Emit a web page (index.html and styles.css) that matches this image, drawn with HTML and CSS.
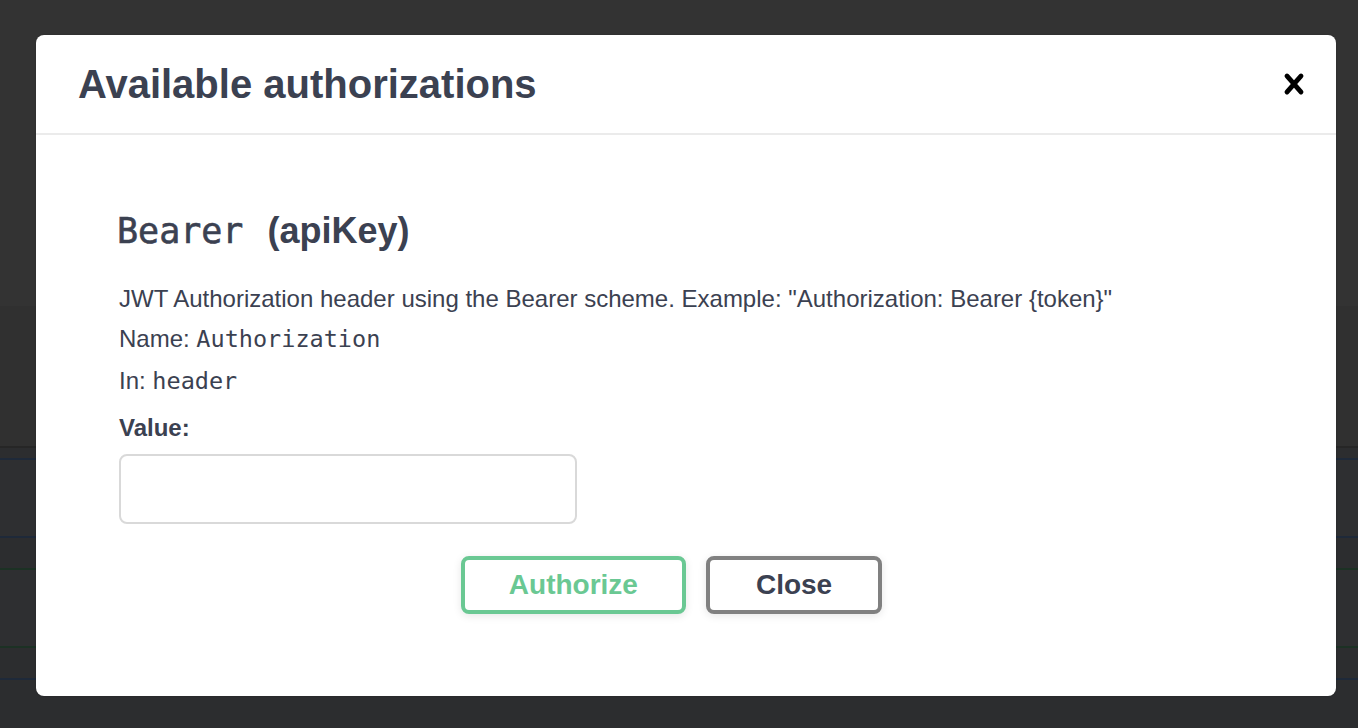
FILE: index.html
```html
<!DOCTYPE html>
<html lang="en">
<head>
<meta charset="utf-8">
<title>Available authorizations</title>
<link rel="stylesheet" href="styles.css">
</head>
<body>
<div class="page">
  <div class="page-top"></div>
  <div class="page-info"></div>
  <div class="op op-blue"></div>
  <div class="op op-green"></div>
  <div class="op op-blue2"></div>
  <div class="page-rest"></div>
</div>

<div class="modal">
  <div class="modal-header">
    <h3 class="modal-title">Available authorizations</h3>
    <button class="close-modal" aria-label="Close">
      <svg width="40" height="40" viewBox="0 0 20 20"><path fill="#000" d="M14.348 14.849a1.2 1.2 0 0 1-1.697 0L10 11.819l-2.651 3.029a1.2 1.2 0 1 1-1.697-1.697l2.758-3.15-2.759-3.152a1.2 1.2 0 1 1 1.697-1.697L10 8.183l2.651-3.031a1.2 1.2 0 1 1 1.697 1.697l-2.758 3.152 2.758 3.15a1.2 1.2 0 0 1 0 1.698z"/></svg>
    </button>
  </div>
  <div class="modal-body">
    <h4 class="scheme-title"><code class="scheme-name">Bearer</code>(apiKey)</h4>
    <p class="desc">JWT Authorization header using the Bearer scheme. Example: "Authorization: Bearer {token}"</p>
    <p class="meta meta-name">Name: <code class="mono">Authorization</code></p>
    <p class="meta meta-in">In: <code class="mono">header</code></p>
    <label class="value-label">Value:</label>
    <input class="value-input" type="text">
    <div class="btn-row">
      <button class="btn btn-authorize">Authorize</button>
      <button class="btn btn-close">Close</button>
    </div>
  </div>
</div>
</body>
</html>
```

FILE: styles.css
```css
html, body {
  margin: 0;
  padding: 0;
}

body {
  width: 1358px;
  height: 728px;
  overflow: hidden;
  background: #2c2d2f;
  font-family: "Liberation Sans", Arial, sans-serif;
  color: #3b4151;
}

.page {
  display: flex;
  flex-direction: column;
}

.page-top {
  height: 306px;
  background: #333333;
}

.page-info {
  height: 140px;
  background: #303030;
  border-bottom: 2px solid #262626;
}

.op {
  height: 76px;
  background: #2e2f31;
}

.op-blue {
  margin-top: 10px;
  border-top: 2px solid #1e2939;
  border-bottom: 2px solid #1e2939;
}

.op-green {
  margin-top: 30px;
  border-top: 2px solid #1c3124;
  border-bottom: 2px solid #1c3124;
}

.op-blue2 {
  margin-top: 30px;
  height: 0;
  border-top: 2px solid #1e2939;
}

.page-rest {
  flex: 1;
}

.modal {
  position: absolute;
  left: 36px;
  top: 35px;
  width: 1300px;
  background: #ffffff;
  border-radius: 8px;
  box-shadow: 0 0 2px rgba(0, 0, 0, 0.2);
}

.modal-header {
  height: 98px;
  display: flex;
  align-items: center;
  justify-content: space-between;
  padding: 0 22px 0 42px;
  border-bottom: 2px solid #ebebeb;
}

.modal-title {
  margin: 0;
  font-size: 40px;
  font-weight: 700;
  color: #3b4151;
}

.close-modal {
  border: none;
  background: none;
  padding: 0;
  width: 40px;
  height: 40px;
  display: flex;
}

.modal-body {
  padding: 76px 80px 82px 83px;
  display: flex;
  flex-direction: column;
  align-items: flex-start;
}

.scheme-title {
  margin: 0;
  font-size: 36px;
  line-height: 40px;
  font-weight: 700;
  color: #3b4151;
}

.scheme-name {
  font-family: "DejaVu Sans Mono", "Liberation Mono", monospace;
  font-size: 35px;
  font-weight: 400;
  -webkit-text-stroke: 0.6px #3b4151;
  margin-right: 24px;
  margin-left: -2px;
}

.desc {
  margin: 34px 0 0;
  font-size: 24px;
  line-height: 28px;
}

.meta {
  margin: 12px 0 0;
  font-size: 24px;
  line-height: 28px;
}

.meta-in {
  margin-top: 14px;
}

.mono {
  font-family: "DejaVu Sans Mono", "Liberation Mono", monospace;
  font-size: 23.5px;
}

.value-label {
  margin-top: 19px;
  font-size: 24px;
  line-height: 28px;
  font-weight: 700;
}

.value-input {
  margin-top: 12px;
  width: 458px;
  height: 70px;
  box-sizing: border-box;
  border: 2px solid #d9d9d9;
  border-radius: 8px;
  background: #fff;
  padding: 0 16px;
  font-size: 24px;
  font-family: "Liberation Sans", Arial, sans-serif;
}

.btn-row {
  align-self: stretch;
  margin-top: 32px;
  display: flex;
  justify-content: center;
  gap: 20px;
  padding-right: 32px;
}

.btn {
  height: 58px;
  box-sizing: border-box;
  border: 4px solid #808080;
  border-radius: 8px;
  background: #fff;
  font-family: "Liberation Sans", Arial, sans-serif;
  font-size: 28px;
  font-weight: 700;
  color: #3b4151;
  padding: 0 44px;
  box-shadow: 0 2px 8px rgba(0, 0, 0, 0.1);
}

.btn-authorize {
  border-color: #6ac893;
  color: #6ac893;
}

.btn-close {
  padding: 0 46px;
}
```
